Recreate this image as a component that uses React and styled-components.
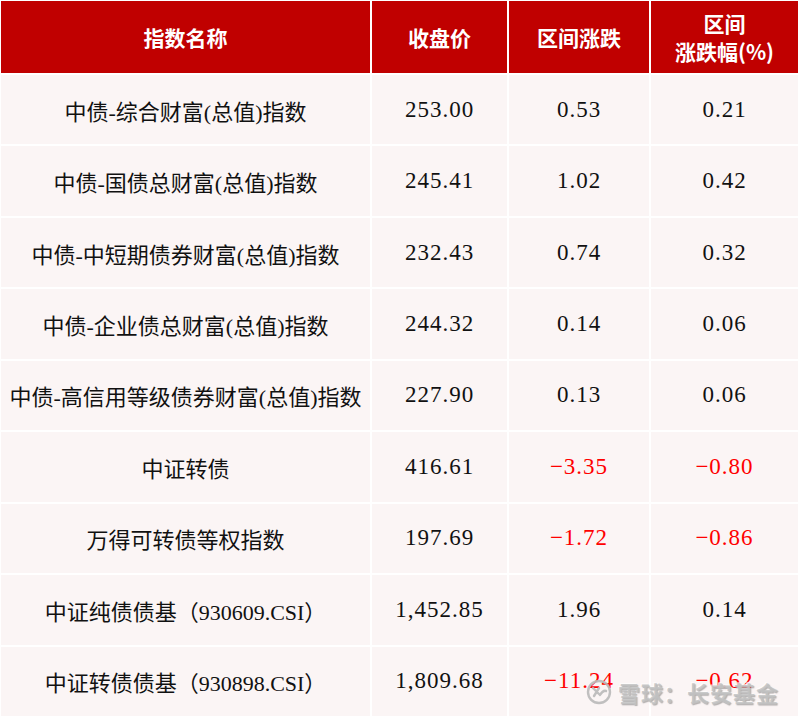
import React from "react";
import styled, { createGlobalStyle } from "styled-components";

const GlobalStyle = createGlobalStyle`
  html, body {
    margin: 0;
    padding: 0;
    background: #ffffff;
  }
  body {
    font-family: "Liberation Serif", "Noto Sans CJK SC", serif;
  }
`;

const Page = styled.div`
  position: relative;
  width: 800px;
  height: 716px;
  overflow: hidden;
  background: #ffffff;
`;

const Table = styled.div`
  display: grid;
  grid-template-columns: 369px 135px 140px 147px;
  grid-template-rows: 72px repeat(9, 1fr);
  gap: 2px;
  padding: 1px 0 0 1px;
  height: 716px;
  box-sizing: border-box;
`;

const HeadCell = styled.div`
  background: #c00000;
  color: #ffffff;
  display: flex;
  flex-direction: column;
  align-items: center;
  justify-content: center;
  text-align: center;
  font-family: "Noto Sans CJK SC", sans-serif;
  font-weight: 700;
  font-size: 21px;
  line-height: 28px;
`;

const Cell = styled.div`
  background: #fbf5f5;
  color: ${(p) => (p.$neg ? "#ff0000" : "#111111")};
  display: flex;
  align-items: center;
  justify-content: center;
  white-space: nowrap;
  font-size: ${(p) => (p.$num ? "23px" : "22px")};
  letter-spacing: ${(p) => (p.$num ? "1px" : "0")};
`;

const Watermark = styled.div`
  position: absolute;
  left: 586px;
  top: 676px;
  display: flex;
  align-items: center;
  gap: 6px;
  color: rgba(195, 195, 195, 0.85);
  font-family: "Noto Sans CJK SC", sans-serif;
  font-size: 22px;
  font-weight: 700;
  letter-spacing: 1px;
  text-shadow: 1px 1px 1px rgba(90, 90, 90, 0.45), -1px -1px 0 rgba(255, 255, 255, 0.7);
  pointer-events: none;
`;

const rows = [
  ["中债-综合财富(总值)指数", "253.00", "0.53", "0.21"],
  ["中债-国债总财富(总值)指数", "245.41", "1.02", "0.42"],
  ["中债-中短期债券财富(总值)指数", "232.43", "0.74", "0.32"],
  ["中债-企业债总财富(总值)指数", "244.32", "0.14", "0.06"],
  ["中债-高信用等级债券财富(总值)指数", "227.90", "0.13", "0.06"],
  ["中证转债", "416.61", "−3.35", "−0.80"],
  ["万得可转债等权指数", "197.69", "−1.72", "−0.86"],
  ["中证纯债债基（930609.CSI）", "1,452.85", "1.96", "0.14"],
  ["中证转债债基（930898.CSI）", "1,809.68", "−11.24", "−0.62"],
];

const Logo = () => (
  <svg width="26" height="26" viewBox="0 0 26 26">
    <circle cx="13" cy="13" r="11" fill="none" stroke="rgba(185,185,185,0.9)" strokeWidth="2.4" />
    <path
      d="M7 9 L13 15 M13 9 L8 17 M14 16 Q17 11 20 12"
      fill="none"
      stroke="rgba(185,185,185,0.9)"
      strokeWidth="2.4"
      strokeLinecap="round"
    />
  </svg>
);

export default function App() {
  return (
    <Page>
      <GlobalStyle />
      <Table>
        <HeadCell>指数名称</HeadCell>
        <HeadCell>收盘价</HeadCell>
        <HeadCell>区间涨跌</HeadCell>
        <HeadCell>
          <span>区间</span>
          <span>涨跌幅(%)</span>
        </HeadCell>
        {rows.map((r) => (
          <React.Fragment key={r[0]}>
            <Cell>{r[0]}</Cell>
            <Cell $num>{r[1]}</Cell>
            <Cell $num $neg={r[2].startsWith("−")}>{r[2]}</Cell>
            <Cell $num $neg={r[3].startsWith("−")}>{r[3]}</Cell>
          </React.Fragment>
        ))}
      </Table>
      <Watermark>
        <Logo />
        <span>雪球：长安基金</span>
      </Watermark>
    </Page>
  );
}
